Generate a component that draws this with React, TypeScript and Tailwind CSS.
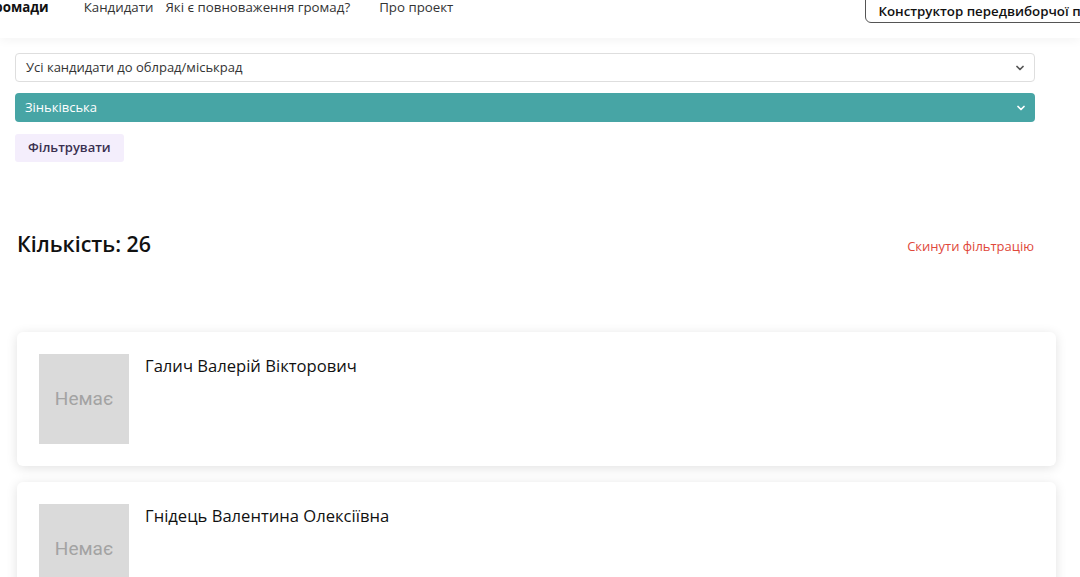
import { ChevronDown } from "lucide-react";

const candidates = ["Галич Валерій Вікторович", "Гнідець Валентина Олексіївна"];

function CandidateCard({ name }: { name: string }) {
  return (
    <div className="flex gap-4 rounded-md bg-white px-[22px] pt-[22px] pb-[22px] shadow-[0_2px_12px_rgba(0,0,0,0.12)]">
      <div className="flex h-[90px] w-[90px] shrink-0 items-center justify-center bg-[#dadada] font-['Roboto',sans-serif] text-[19px] text-[#a3a3a3]">
        Немає
      </div>
      <div className="pt-[1px] text-[16.6px] leading-[22px] font-medium text-[#111]">{name}</div>
    </div>
  );
}

export default function App() {
  return (
    <div className="min-h-screen overflow-hidden bg-white font-['Open_Sans',sans-serif] text-[#222]">
      {/* Header */}
      <header className="relative z-10 h-[38px] overflow-hidden bg-white shadow-[0_2px_10px_rgba(0,0,0,0.05)]">
        <div className="flex items-start whitespace-nowrap text-[13.3px] leading-[15px]">
          <span className="-ml-[12px] font-bold text-[#111]">громади</span>
          <a className="ml-[35px] text-[#333]">Кандидати</a>
          <a className="ml-[12px] text-[#333]">Які є повноваження громад?</a>
          <a className="ml-[29px] text-[#333]">Про проект</a>
          <button className="-mt-[12px] ml-[412px] h-[35px] rounded-md border border-[#555] bg-white pl-[12px] pr-4 pt-[11px] text-left text-[13.3px] leading-[15px] font-semibold text-[#111]">
            Конструктор передвиборчої програми
          </button>
        </div>
      </header>

      {/* Filters */}
      <section className="w-[1020px] pl-[15px] pt-[15px] box-content">
        <div className="flex h-[29px] items-center justify-between rounded-[4px] border border-[#dedede] bg-white pl-[10px] pr-[8px] text-[13px] text-[#333]">
          <span>Усі кандидати до облрад/міськрад</span>
          <ChevronDown className="h-3 w-3 text-[#555]" strokeWidth={3.5} />
        </div>
        <div className="mt-[11px] flex h-[29px] items-center justify-between rounded-[4px] bg-[#47a5a5] pl-[10px] pr-[8px] text-[13px] text-white">
          <span>Зіньківська</span>
          <ChevronDown className="h-3 w-3 text-white" strokeWidth={3.5} />
        </div>
        <button className="mt-[12px] h-[28px] rounded-[3px] bg-[#f4eefc] px-[13px] text-[13px] font-semibold text-[#3a3050]">
          Фільтрувати
        </button>
      </section>

      {/* Count */}
      <div className="flex w-[1034px] items-center justify-between pl-[17px] pt-[67px]">
        <h2 className="text-[21.4px] leading-[30px] font-semibold text-[#111]">Кількість: 26</h2>
        <a className="mt-[6px] text-[13px] text-[#e0483b]">Скинути фільтрацію</a>
      </div>

      {/* Candidates */}
      <div className="ml-[17px] mt-[73px] flex w-[1039px] flex-col gap-[16px]">
        {candidates.map((c) => (
          <CandidateCard key={c} name={c} />
        ))}
      </div>
    </div>
  );
}
